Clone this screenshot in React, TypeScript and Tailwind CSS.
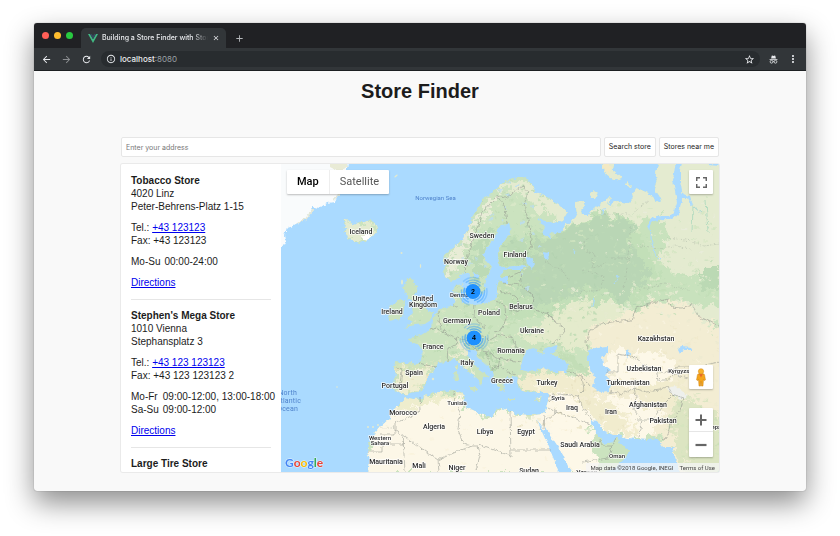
import React from "react";
import {
  MdAdd,
  MdArrowBack,
  MdArrowForward,
  MdClose,
  MdInfoOutline,
  MdMoreVert,
  MdRefresh,
  MdStarBorder,
} from "react-icons/md";

type Store = {
  name: string;
  lines: string[];
  tel?: string;
  fax?: string;
  hours: [string, string][];
};

const stores: Store[] = [
  {
    name: "Tobacco Store",
    lines: ["4020 Linz", "Peter-Behrens-Platz 1-15"],
    tel: "+43 123123",
    fax: "+43 123123",
    hours: [["Mo-Su", "00:00-24:00"]],
  },
  {
    name: "Stephen's Mega Store",
    lines: ["1010 Vienna", "Stephansplatz 3"],
    tel: "+43 123 123123",
    fax: "+43 123 123123 2",
    hours: [
      ["Mo-Fr", "09:00-12:00, 13:00-18:00"],
      ["Sa-Su", "09:00-12:00"],
    ],
  },
  { name: "Large Tire Store", lines: [], hours: [] },
];

function StoreEntry({ store }: { store: Store }) {
  return (
    <li className="border-b border-[#e6e6e6] pt-[9px] pb-[10px] first:pt-0 last:border-0">
      <h2 className="font-bold">{store.name}</h2>
      {store.lines.map((line) => (
        <p key={line}>{line}</p>
      ))}
      {store.tel && (
        <div className="mt-2">
          <p>
            Tel.:{" "}
            <a href="#tel" className="text-[#0000ee] underline">
              {store.tel}
            </a>
          </p>
          <p>Fax: {store.fax}</p>
        </div>
      )}
      {store.hours.length > 0 && (
        <>
          <table className="mt-2">
            <tbody>
              {store.hours.map(([day, time]) => (
                <tr key={day}>
                  <th scope="row" className="p-0 pr-1 text-left font-normal whitespace-nowrap">
                    {day}
                  </th>
                  <td className="p-0 whitespace-nowrap">{time}</td>
                </tr>
              ))}
            </tbody>
          </table>
          <p className="mt-2">
            <a href="#directions" className="text-[#0000ee] underline">
              Directions
            </a>
          </p>
        </>
      )}
    </li>
  );
}

const MAINLAND =
  "460,277 455,280 450,281 445,277 443,270 447,264 443,262 444,255 452,248 462,240 467,232 470,225 472,217 478,208 483,200 492,192 500,185 508,180 517,177 523,177 530,182 535,187 533,192 547,197 560,205 567,213 563,220 553,223 543,220 538,217 541,223 545,228 543,235 550,239 551,232 560,234 564,228 573,220 577,213 575,202 583,201 585,205 581,210 582,215 588,215 595,208 607,200 610,197 608,205 617,201 628,203 633,198 632,192 637,188 648,193 655,200 661,203 660,197 654,188 657,180 655,173 660,160 725,160 725,475 368,475 370,460 367,452 372,437 380,427 390,418 393,410 402,402 405,397 413,399 423,398 427,395 440,392 453,390 462,392 465,397 462,403 465,407 473,410 483,415 492,417 495,410 502,408 510,412 518,414 528,415 535,415 544,414 548,402 548,392 537,392 530,393 520,390 517,383 518,378 515,375 507,378 503,383 505,390 500,392 497,383 493,377 492,370 487,365 478,357 475,350 468,350 468,355 473,363 480,370 490,376 483,378 482,385 480,386 478,379 470,373 463,367 458,361 453,358 448,362 438,363 435,369 433,372 427,378 425,385 422,391 410,393 404,395 400,392 393,390 394,383 396,373 393,367 395,362 407,363 419,364 421,360 423,352 420,345 410,341 408,338 416,336 422,335 427,332 432,326 434,317 438,310 447,307 453,305 455,300 453,290 457,285 463,284 463,290 462,298 463,303 475,305 487,303 495,300 497,293 497,287 500,280 503,283 508,283 508,277 500,277 502,272 508,270 520,270 527,267 523,264 513,266 502,267 498,263 497,255 500,247 507,238 511,230 509,224 503,225 498,228 495,238 487,247 483,255 487,262 492,268 487,277 485,285 483,293 475,297 470,285 468,277 465,273 462,275";

const ISLANDS = [
  "343,221 347,219 351,223 349,225 355,223 360,222 365,222 370,219 373,222 377,225 378,230 373,236 367,240 360,243 353,241 348,239 349,237 347,232 343,232 347,229 342,228 347,226",
  "408,278 415,280 413,284 418,286 417,292 414,295 420,298 423,304 427,310 433,313 431,320 425,324 415,325 405,328 412,321 407,318 413,313 412,308 413,305 410,300 407,297 405,291 403,288",
  "395,303 400,299 405,302 404,308 403,317 396,320 389,321 388,315 392,311 389,306",
  "602,160 615,160 613,170 622,178 620,181 611,178 604,172",
  "627,182 632,187 631,189 626,184",
  "590,194 594,191 597,193 595,198 591,198",
  "468,387 475,387 478,389 476,392 469,389",
  "454,373 458,372 459,380 455,382",
  "455,365 458,364 458,371 455,370",
  "506,398 515,398 515,400 507,400",
  "535,399 542,397 540,401 536,401",
  "464,291 468,290 468,296 465,296",
];

const INNER_WATERS = [
  "523,358 527,350 533,347 540,353 545,354 543,350 557,345 558,349 550,354 560,358 568,365 567,372 553,372 543,368 530,372 520,370",
  "588,350 597,347 608,346 608,353 602,357 603,365 610,370 605,375 610,382 609,391 600,392 593,387 595,377 588,365",
  "537,420 544,430 546,427 553,440 563,455 572,475 560,475 555,462 548,445 542,432",
  "591,420 597,421 603,430 613,435 617,435 627,438 647,440 657,438 663,447 675,447 673,453 677,462 680,475 600,475 615,467 627,457 629,450 620,443 617,437 613,442 603,444 601,440 595,430",
  "676,160 683,160 680,170 680,180 683,197 681,203 679,214 672,220 662,219 652,222 649,230 647,226 651,218 661,216 670,216 674,212 677,203 673,180",
  "682,194 690,196 693,205 691,206 687,198 682,198",
  "526,258 531,257 535,264 532,269 527,265",
  "543,252 548,253 549,261 545,260",
  "678,349 683,346 691,347 693,350 685,350 680,353",
  "625,351 629,349 631,355 627,358",
  "460,275 468,273 470,279 464,282",
  "474,272 480,276 477,279 473,275",
  "705,160 719,160 719,166 708,165",
];

type Patch = { points: string; color: string };

const PATCHES: Patch[] = [
  { color: "#e4ebd0", points: "560,160 725,160 725,322 690,325 660,310 640,290 636,262 640,245 625,218 600,216 580,228 565,240 552,226" },
  { color: "#c8e2bd", points: "640,222 662,216 668,232 660,252 664,268 700,280 725,282 725,306 690,302 640,304 618,318 608,296 640,276 646,262 636,240" },
  { color: "#c2dfb8", points: "498,236 552,232 600,212 634,220 660,280 640,300 600,312 550,318 500,320 494,302" },
  { color: "#b9d6b5", points: "530,253 545,238 557,233 577,225 603,215 637,224 628,243 645,263 655,276 638,287 629,297 622,320 617,298 603,287 577,293 552,305 535,304 520,292 522,270" },
  { color: "#bcdab6", points: "500,262 503,250 515,238 525,236 530,256 514,264" },
  { color: "#bcdab6", points: "471,268 475,245 484,232 492,230 484,254 487,272 480,290" },
  { color: "#e8ecd6", points: "445,276 446,258 462,243 472,222 486,202 500,188 492,206 482,222 470,240 462,258 458,272" },
  { color: "#e4ebd0", points: "500,190 520,177 536,186 560,206 562,214 540,212 528,198 514,192" },
  { color: "#bbd9b4", points: "694,274 725,264 725,288 704,290" },
  { color: "#e4ebcc", points: "552,310 585,300 612,302 640,316 600,345 570,352 545,342 530,345 520,334 540,326" },
  { color: "#c3deb7", points: "560,352 575,356 590,372 584,374 568,366" },
  { color: "#f3edd3", points: "584,336 600,324 640,306 665,302 690,306 704,322 725,330 725,475 660,475 660,436 600,430 570,400 560,386 590,372 590,345" },
  { color: "#fdf8e8", points: "600,358 620,350 655,352 680,362 672,378 640,388 612,380" },
  { color: "#fdf8e8", points: "545,385 565,392 580,404 612,396 640,400 664,414 648,440 620,440 590,424 600,475 540,475 540,410" },
  { color: "#f1ecce", points: "515,378 540,372 570,374 592,384 590,396 560,394 545,393 520,390" },
  { color: "#f1ecce", points: "587,396 612,404 630,420 636,438 612,434 594,418 580,402" },
  { color: "#f1ecce", points: "632,388 660,380 690,384 688,396 660,410 640,404" },
  { color: "#dce5c2", points: "676,398 700,404 725,424 725,475 682,475 676,440 668,420" },
  { color: "#eeeed2", points: "394,364 420,366 435,368 424,384 420,391 400,393 396,380" },
  { color: "#d2e3bb", points: "394,362 420,364 434,368 420,370 398,370" },
  { color: "#e6ecd0", points: "457,360 470,368 482,382 478,380 464,370" },
  { color: "#fcf7e7", points: "360,475 370,432 392,410 404,400 420,400 460,392 466,408 490,418 500,409 545,416 565,475" },
  { color: "#eeedcd", points: "392,412 404,398 424,398 462,390 464,396 432,401 408,410" },
  { color: "#dbe6c6", points: "528,414 535,413 534,418 531,421" },
  { color: "#e9ebcf", points: "448,352 462,350 468,346 474,348 466,354 450,358" },
  { color: "#b9d8b0", points: "464,344 480,346 490,352 498,365 492,366 480,354" },
  { color: "#e4ebd0", points: "343,222 360,222 376,224 374,236 360,242 348,238" },
];

type SpeckleZone = { x: number; y: number; w: number; h: number; n: number; colors: string[] };

const SPECKLES: SpeckleZone[] = [
  { x: 445, y: 180, w: 100, h: 115, n: 230, colors: ["#b9d8b1", "#dceaca", "#c0dcb6", "#b9dcf4"] },
  { x: 500, y: 225, w: 135, h: 75, n: 110, colors: ["#b3d2b0", "#c2dcb9", "#bedab8"] },
  { x: 570, y: 195, w: 150, h: 70, n: 110, colors: ["#d3e6c2", "#e9ecdc", "#cfe4bf", "#e6ebd2"] },
  { x: 630, y: 255, w: 90, h: 55, n: 90, colors: ["#d6e6c4", "#e6ebd2", "#c1ddb7"] },
  { x: 405, y: 285, w: 190, h: 85, n: 320, colors: ["#b9d8b0", "#dbe8c6", "#c0dcb4", "#e2e9cd"] },
  { x: 560, y: 288, w: 120, h: 30, n: 90, colors: ["#e6ebd0", "#c1ddb6", "#eceed8"] },
  { x: 590, y: 320, w: 130, h: 80, n: 120, colors: ["#efe8c9", "#faf4e2", "#ecead0"] },
  { x: 395, y: 362, w: 42, h: 30, n: 60, colors: ["#f5edd0", "#d8e4bf", "#e9e0bc"] },
  { x: 515, y: 373, w: 120, h: 60, n: 130, colors: ["#f4ecd0", "#e8e2c0", "#fbf5e4"] },
  { x: 670, y: 392, w: 50, h: 70, n: 70, colors: ["#c9dfb5", "#eeebd0", "#d4e4be"] },
  { x: 375, y: 400, w: 200, h: 70, n: 40, colors: ["#f8f1da", "#f9f3de"] },
];

const BORDERS = [
  "M465,273 L467,258 470,248 476,232 482,212 490,203 497,196 505,207 507,224",
  "M497,196 L506,198 516,190 524,186 528,192 524,205 529,225 532,246 522,262",
  "M520,270 L521,283 M503,283 L520,285 M500,290 L514,296 520,302 M508,277 L520,272",
  "M475,305 L474,316 478,322 486,328 M496,301 L505,306 506,318 502,330 494,332",
  "M520,285 L534,296 530,308 510,312 M530,308 L548,314 556,322 566,330 554,344",
  "M453,305 L458,306 M438,312 L440,326 446,334 456,338 458,344 448,348 447,362",
  "M456,338 L468,340 474,336 484,336 490,340 500,334 512,338 518,350 524,354",
  "M446,334 L436,328 430,330 M468,344 L476,350 488,352 496,358 510,360 520,362",
  "M492,368 L500,366 508,372 516,374 M486,352 L490,366 M500,358 L498,368",
  "M419,363 L430,366 436,368 M397,368 L402,370 400,386",
  "M568,372 L582,376 590,386 M582,376 L584,390 578,396 560,394 548,396",
  "M578,396 L584,410 592,420 M548,402 L560,398 568,394 M548,408 L556,412 546,421",
  "M556,412 L574,418 590,424 M610,391 L622,394 634,388 636,396 634,410 642,420 638,438",
  "M634,388 L646,392 660,390 668,386 M636,420 L652,420 664,404 676,392",
  "M668,386 L672,394 684,398 680,410 672,420 668,436 662,440",
  "M606,372 L618,372 618,354 636,358 648,368 656,368 664,374 680,366 700,366 719,362",
  "M588,350 L586,342 590,330 602,324 612,322 632,320 636,308 656,302 668,299 670,307 682,308 692,304 698,316 719,326",
  "M656,368 L658,380 668,380 672,374 688,378",
  "M420,397 L421,410 404,420 395,422 395,434 380,434 M395,430 L438,460 456,452 472,446 478,446",
  "M454,390 L455,404 460,412 458,430 464,444 472,446 M367,452 L382,452 382,444 403,444 403,438",
  "M403,438 L405,471 M510,412 L511,456 478,444 M511,450 L552,450 M438,460 L439,471",
  "M478,446 L480,456 476,471 M545,415 L544,428 M600,440 L602,446 612,446 616,438 M612,446 L608,458 582,462",
];

const DASHED = [
  "M586,238 L584,250 594,254 592,268 602,266 610,258 628,258 M630,226 L630,248 628,262 624,288",
  "M584,270 L604,276 600,290 580,292 M640,246 L660,248 676,246 694,250",
  "M666,238 L686,240 704,246 719,244 M640,290 L664,284 690,290",
  "M545,262 L562,270 570,282 M380,428 L395,428 M604,214 L632,214 648,200",
];

type Label = { text: string; x: number; y: number; small?: boolean };

const LABELS: Label[] = [
  { text: "Iceland", x: 361, y: 234 },
  { text: "Sweden", x: 482, y: 238 },
  { text: "Finland", x: 515, y: 257 },
  { text: "Norway", x: 456, y: 264 },
  { text: "Denmark", x: 462, y: 297, small: true },
  { text: "United", x: 423, y: 301 },
  { text: "Kingdom", x: 423, y: 307 },
  { text: "Ireland", x: 392, y: 314 },
  { text: "Poland", x: 489, y: 315 },
  { text: "Belarus", x: 521, y: 309 },
  { text: "Germany", x: 457, y: 323 },
  { text: "Ukraine", x: 532, y: 333 },
  { text: "France", x: 433, y: 349 },
  { text: "Romania", x: 511, y: 353 },
  { text: "Italy", x: 467, y: 365 },
  { text: "Spain", x: 414, y: 375 },
  { text: "Portugal", x: 395, y: 388 },
  { text: "Greece", x: 502, y: 383 },
  { text: "Turkey", x: 547, y: 385 },
  { text: "Kazakhstan", x: 656, y: 341 },
  { text: "Uzbekistan", x: 644, y: 371 },
  { text: "Kyrgyzstan", x: 683, y: 373, small: true },
  { text: "Turkmenistan", x: 628, y: 385 },
  { text: "Syria", x: 558, y: 400, small: true },
  { text: "Tunisia", x: 457, y: 405, small: true },
  { text: "Afghanistan", x: 648, y: 407 },
  { text: "Iraq", x: 572, y: 410 },
  { text: "Iran", x: 611, y: 414 },
  { text: "Pakistan", x: 663, y: 423 },
  { text: "Morocco", x: 403, y: 415 },
  { text: "Algeria", x: 434, y: 429 },
  { text: "Libya", x: 485, y: 434 },
  { text: "Egypt", x: 526, y: 434 },
  { text: "Western", x: 380, y: 440, small: true },
  { text: "Sahara", x: 380, y: 445, small: true },
  { text: "Saudi Arabia", x: 580, y: 447 },
  { text: "Oman", x: 617, y: 458, small: true },
  { text: "Mauritania", x: 386, y: 464 },
  { text: "Mali", x: 419, y: 468 },
  { text: "Niger", x: 457, y: 470 },
  { text: "Sudan", x: 529, y: 473 },
  { text: "Yemen", x: 587, y: 475 },
  { text: "Nepal", x: 715, y: 429, small: true },
];

function speckleShapes() {
  let seed = 20181;
  const random = () => {
    seed = (seed * 16807) % 2147483647;
    return seed / 2147483647;
  };
  return SPECKLES.flatMap((zone, z) =>
    Array.from({ length: zone.n }, (_, i) => (
      <ellipse
        key={`${z}-${i}`}
        cx={zone.x + random() * zone.w}
        cy={zone.y + random() * zone.h}
        rx={0.6 + random() * 2}
        ry={0.4 + random() * 1.3}
        fill={zone.colors[Math.floor(random() * zone.colors.length)]}
        opacity={0.75}
      />
    )),
  );
}

function Cluster({ x, y, count }: { x: number; y: number; count: number }) {
  return (
    <g>
      <circle cx={x} cy={y} r={9} fill="none" stroke="#1e90ff" strokeOpacity={0.55} strokeWidth={1.6} strokeDasharray="13 5.8" />
      <circle cx={x} cy={y} r={11.5} fill="none" stroke="#1e90ff" strokeOpacity={0.4} strokeWidth={1.5} strokeDasharray="16 8" strokeDashoffset={2} />
      <circle cx={x} cy={y} r={14} fill="none" stroke="#1e90ff" strokeOpacity={0.25} strokeWidth={1.5} strokeDasharray="17 12.3" strokeDashoffset={4} />
      <circle cx={x} cy={y} r={7.5} fill="#1e90ff" />
      <text x={x} y={y + 2} textAnchor="middle" className="fill-black font-['Liberation_Sans',Arial,sans-serif] text-[7px] font-bold">
        {count}
      </text>
    </g>
  );
}

function WorldMap() {
  return (
    <svg
      viewBox="281 164 438 308"
      preserveAspectRatio="xMidYMid slice"
      role="img"
      aria-label="Map of Europe with store locations"
      className="block h-full w-full font-[Roboto,'Liberation_Sans',sans-serif]"
    >
      <defs>
        <filter id="coast" x="-2%" y="-2%" width="104%" height="104%">
          <feTurbulence type="fractalNoise" baseFrequency="0.22" numOctaves="3" seed="4" result="noise" />
          <feDisplacementMap in="SourceGraphic" in2="noise" scale="5" xChannelSelector="R" yChannelSelector="G" />
        </filter>
        <filter id="terrain" x="-5%" y="-5%" width="110%" height="110%">
          <feTurbulence type="fractalNoise" baseFrequency="0.12" numOctaves="4" seed="9" result="noise" />
          <feDisplacementMap in="SourceGraphic" in2="noise" scale="22" xChannelSelector="R" yChannelSelector="G" />
          <feGaussianBlur stdDeviation="0.7" />
        </filter>
        <clipPath id="land">
          <polygon points={MAINLAND} />
          {ISLANDS.map((points) => (
            <polygon key={points} points={points} />
          ))}
        </clipPath>
      </defs>
      <rect x="270" y="150" width="460" height="340" fill="#aadaff" />
      <g filter="url(#coast)">
        <polygon
          fill="#f9fbfc"
          points="270,155 350,155 348,168 342,176 346,184 338,196 335,202 327,203 320,208 313,207 310,213 305,220 297,225 287,228 285,235 286,240 282,247 270,250"
        />
        <path d="M326,155 L348,155 348,166 340,172 330,167Z" fill="#e9ebd6" />
        <path d="M313,209 L306,219 297,224 M342,178 L344,188 334,200" stroke="#e3e8da" strokeWidth="1.6" fill="none" />
        <g clipPath="url(#land)">
          <rect x="270" y="150" width="460" height="340" fill="#cbe3bf" />
          <g filter="url(#terrain)">
            {PATCHES.map((patch) => (
              <polygon key={patch.points} points={patch.points} fill={patch.color} />
            ))}
          </g>
          {speckleShapes()}
          <ellipse cx="367" cy="237" rx="5" ry="2.5" fill="#fff" />
          <ellipse cx="607" cy="168" rx="4" ry="5" fill="#f3e9c4" />
          <path d="M666,388 L676,386 688,396 680,400Z" fill="#eef0ec" />
        </g>
        {INNER_WATERS.map((points) => (
          <polygon key={points} points={points} fill="#aadaff" />
        ))}
        <g fill="none" stroke="#aadaff" strokeWidth="1">
          <path d="M650,228 L652,244 656,256 662,262" />
          <path d="M618,276 L614,284 M594,298 L592,306 M573,250 L575,254 M604,208 L603,214" />
          <path d="M693,206 L702,214" stroke="#a8d8d0" />
          <path d="M693,206 L692,232 M706,200 L708,232" stroke="#b5dcc0" />
        </g>
        <g fill="none" stroke="#8f948c" strokeWidth="0.7" strokeOpacity="0.75" strokeLinejoin="round">
          {BORDERS.map((d) => (
            <path key={d} d={d} />
          ))}
        </g>
        <g fill="none" stroke="#9aa596" strokeWidth="0.6" strokeOpacity="0.6" strokeDasharray="2 1.5">
          {DASHED.map((d) => (
            <path key={d} d={d} />
          ))}
        </g>
      </g>
      <g fill="#e3ead0">
        <circle cx="401.500" cy="253" r="1" />
        <ellipse cx="420.500" cy="266" rx="0.700" ry="2" />
        <ellipse cx="402" cy="282" rx="1" ry="2.500" />
        <circle cx="337" cy="387" r="0.800" />
        <circle cx="368" cy="427" r="1" />
        <circle cx="373" cy="427" r="1" />
        <circle cx="378" cy="425" r="1" />
        <circle cx="433" cy="379" r="1.200" />
        <ellipse cx="396" cy="176" rx="2" ry="0.800" transform="rotate(-40 396 176)" />
      </g>
      <g className="text-[6px]" fill="#4f83cc">
        <text x="435.500" y="200" textAnchor="middle">Norwegian Sea</text>
        <g className="text-[7px] tracking-wide">
          <text x="297" y="395" textAnchor="end">North</text>
          <text x="301" y="403" textAnchor="end">Atlantic</text>
          <text x="298" y="411" textAnchor="end">Ocean</text>
        </g>
      </g>
      <g textAnchor="middle" fill="#2b2b2b" stroke="#ffffff" strokeOpacity="0.85" strokeWidth="1.6" strokeLinejoin="round" paintOrder="stroke">
        {LABELS.map((label) => (
          <text
            key={label.text}
            x={label.x}
            y={label.y}
            className={label.small ? "text-[6px] font-medium" : "text-[7px] font-medium"}
          >
            {label.text}
          </text>
        ))}
      </g>
      <Cluster x={473} y={291.5} count={2} />
      <Cluster x={474} y={338} count={4} />
    </svg>
  );
}

function Pegman() {
  return (
    <svg viewBox="0 0 12 20" className="h-[19px] w-3" aria-hidden="true">
      <path d="M2.200 7.500Q2.400 6 4 6h4q1.600 0 1.800 1.500l.900 5-1.500.700-.600-1.200-.500 7H6.400L6 14l-.4 5H3.900l-.5-7-.6 1.200-1.500-.7z" fill="#f5a51c" stroke="#c97f10" strokeWidth=".5" />
      <path d="M4 6.300h4L6 10z" fill="#e8682c" />
      <circle cx="6" cy="3.500" r="2.800" fill="#f9b22b" stroke="#cf8613" strokeWidth=".5" />
    </svg>
  );
}

function Incognito() {
  return (
    <svg viewBox="0 0 16 16" className="size-[9px]" aria-hidden="true" fill="#e8eaed">
      <path d="M4.800 1.500 6 1l2 .6L10 1l1.200.5L12.300 6H3.700z" />
      <path d="M1 7h14v1.500H1z" />
      <g fill="none" stroke="#e8eaed" strokeWidth="1.400">
        <circle cx="4.500" cy="12" r="2.500" />
        <circle cx="11.500" cy="12" r="2.500" />
        <path d="M7 11.700q1-.7 2 0" />
      </g>
    </svg>
  );
}

function BrowserChrome() {
  return (
    <header className="font-[Inter,'Liberation_Sans',sans-serif] text-[#e8eaed]">
      <div className="flex h-[25px] items-end bg-[#202124] pl-2">
        <div className="flex h-full items-center gap-[5px] pr-2">
          <button type="button" aria-label="Close window" className="size-[7px] rounded-full bg-[#ff5f57]" />
          <button type="button" aria-label="Minimize window" className="size-[7px] rounded-full bg-[#ffbd2e]" />
          <button type="button" aria-label="Zoom window" className="size-[7px] rounded-full bg-[#28c940]" />
        </div>
        <div className="flex h-5 w-[145px] items-center gap-1 rounded-t-[5px] bg-[#323639] pr-[6px] pl-[7px]">
          <svg viewBox="0 0 20 18" className="w-[10px] shrink-0" aria-hidden="true">
            <path d="M0 0h4l6 10.500L16 0h4L10 18z" fill="#41b883" />
            <path d="M4 0h3.700L10 4l2.300-4H16l-6 10.500z" fill="#35495e" />
          </svg>
          <span className="min-w-0 flex-1 overflow-hidden mask-r-from-85% text-[7px] font-medium whitespace-nowrap">
            Building a Store Finder with Store
          </span>
          <button type="button" aria-label="Close tab">
            <MdClose className="size-2" />
          </button>
        </div>
        <button type="button" aria-label="New tab" className="ml-2 flex h-5 items-center text-[#b4b7ba]">
          <MdAdd className="size-[11px]" />
        </button>
      </div>
      <div className="flex h-[23px] items-center gap-[9px] border-b border-[#1d2022] bg-[#323639] pr-[7px] pl-[7px]">
        <button type="button" aria-label="Back">
          <MdArrowBack className="size-[11px]" />
        </button>
        <button type="button" aria-label="Forward" className="text-[#8b8e91]">
          <MdArrowForward className="size-[11px]" />
        </button>
        <button type="button" aria-label="Reload">
          <MdRefresh className="size-[11px]" />
        </button>
        <div className="flex h-4 min-w-0 flex-1 items-center gap-1 rounded-full bg-[#282c2f] pr-[5px] pl-[5px]">
          <MdInfoOutline className="size-[10px]" />
          <span className="flex-1 text-[8px] font-medium">
            localhost<span className="font-normal text-[#9aa0a6]">:8080</span>
          </span>
          <button type="button" aria-label="Bookmark">
            <MdStarBorder className="size-[11px]" />
          </button>
        </div>
        <Incognito />
        <button type="button" aria-label="Menu">
          <MdMoreVert className="size-3" />
        </button>
      </div>
    </header>
  );
}

const field = "h-5 rounded-[2px] border border-[#e6e6e6] bg-white text-[7px] font-[Inter,'Liberation_Sans',sans-serif]";

export default function App() {
  return (
    <div className="bg-white px-[34px] pt-[23px] pb-11">
      <div className="overflow-hidden rounded-[3px] bg-[#f9f9f9] shadow-[0_0_1px_rgba(0,0,0,0.5),0_12px_28px_rgba(0,0,0,0.45)]">
        <BrowserChrome />
        <main className="px-[87px] pt-[7px] pb-[19px] font-['Liberation_Sans',Arial,sans-serif] text-[#1c1c1c]">
          <h1 className="text-center text-xl leading-[26px] font-bold">Store Finder</h1>
          <form className="mt-[33px] flex gap-[3px]" onSubmit={(event) => event.preventDefault()}>
            <input
              type="text"
              aria-label="Address"
              placeholder="Enter your address"
              className={`${field} min-w-0 flex-1 px-1 placeholder:text-[#777777]`}
            />
            <button type="submit" className={`${field} px-1`}>
              Search store
            </button>
            <button type="button" className={`${field} px-1`}>
              Stores near me
            </button>
          </form>
          <div className="mt-[7px] flex h-[308px] overflow-hidden rounded-[2px] shadow-[0_0_0_1px_#eaeaea]">
            <ul className="w-40 shrink-0 overflow-hidden bg-white px-[10px] pt-[10px] text-[10px] leading-[13px]">
              {stores.map((store) => (
                <StoreEntry key={store.name} store={store} />
              ))}
            </ul>
            <section aria-label="Map" className="relative min-w-0 flex-1 overflow-hidden font-[Roboto,'Liberation_Sans',sans-serif]">
              <WorldMap />
              <div className="absolute top-[6px] left-[6px] flex h-6 rounded-[1px] bg-white text-[11px] shadow-[0_1px_2px_rgba(0,0,0,0.25)]">
                <button type="button" className="border-r border-[#eeeeee] px-[10px] font-medium text-black">
                  Map
                </button>
                <button type="button" className="px-[10px] text-[#565656]">
                  Satellite
                </button>
              </div>
              <button
                type="button"
                aria-label="Toggle fullscreen view"
                className="absolute top-[6px] right-[6px] flex size-6 items-center justify-center rounded-[1px] bg-white shadow-[0_1px_2px_rgba(0,0,0,0.25)]"
              >
                <svg viewBox="0 0 11 11" className="size-[11px]" fill="none" stroke="#666666" strokeWidth="1.500" aria-hidden="true">
                  <path d="M.7 4V.7H4M7 .7h3.300V4M10.300 7v3.300H7M4 10.300H.7V7" />
                </svg>
              </button>
              <div className="absolute right-[6px] bottom-[15px] flex flex-col items-center gap-[19px]">
                <button
                  type="button"
                  aria-label="Street View"
                  className="flex size-6 items-center justify-center rounded-[1px] bg-white shadow-[0_1px_2px_rgba(0,0,0,0.25)]"
                >
                  <Pegman />
                </button>
                <div className="flex flex-col rounded-[1px] bg-white shadow-[0_1px_2px_rgba(0,0,0,0.25)]">
                  <button type="button" aria-label="Zoom in" className="flex size-6 items-center justify-center border-b border-[#e6e6e6]">
                    <svg viewBox="0 0 12 12" className="size-3" stroke="#666666" strokeWidth="2" aria-hidden="true">
                      <path d="M6 .5v11M.5 6h11" />
                    </svg>
                  </button>
                  <button type="button" aria-label="Zoom out" className="flex h-[25px] w-6 items-center justify-center">
                    <svg viewBox="0 0 12 12" className="size-3" stroke="#666666" strokeWidth="2.200" aria-hidden="true">
                      <path d="M.5 6h11" />
                    </svg>
                  </button>
                </div>
              </div>
              <a
                href="#google"
                aria-label="Google"
                className="absolute bottom-0 left-1 font-[Lato,'Open_Sans',sans-serif] text-[12px] leading-[18px] font-bold [paint-order:stroke] [-webkit-text-stroke:1px_#ffffffaa]"
              >
                <span className="text-[#4285f4]">G</span>
                <span className="text-[#ea4335]">o</span>
                <span className="text-[#fbbc05]">o</span>
                <span className="text-[#4285f4]">g</span>
                <span className="text-[#34a853]">l</span>
                <span className="text-[#ea4335]">e</span>
              </a>
              <div className="absolute right-0 bottom-0 flex h-[9px] items-center gap-[6px] bg-[#f5f5f5]/75 px-1 text-[6px] leading-[9px] text-[#444444]">
                <span>Map data ©2018 Google, INEGI</span>
                <a href="#terms">Terms of Use</a>
              </div>
            </section>
          </div>
        </main>
      </div>
    </div>
  );
}
